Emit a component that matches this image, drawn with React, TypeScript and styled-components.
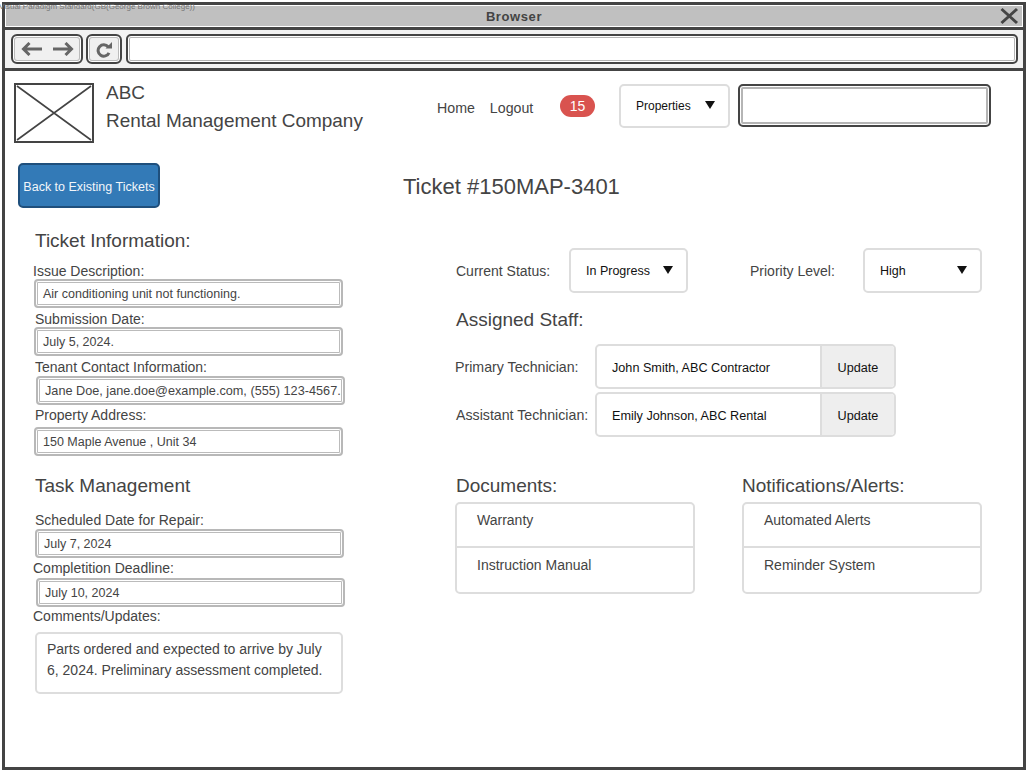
import React from 'react'
import styled, { createGlobalStyle } from 'styled-components'

const Global = createGlobalStyle`
  html, body { margin: 0; padding: 0; background: #fff; }
  body { font-family: "Liberation Sans", Arial, sans-serif; color: #444; }
  * { box-sizing: border-box; }
`

const Page = styled.div`
  position: relative;
  width: 1030px;
  height: 774px;
  padding: 2px 4px 4px 2px;
  overflow: hidden;
`
const Watermark = styled.div`
  position: absolute;
  z-index: 2;
  left: -1px;
  top: 2px;
  font-size: 8px;
  line-height: 9px;
  color: #777;
  white-space: nowrap;
`
const Frame = styled.div`
  height: 100%;
  border: 3px solid #444;
  display: flex;
  flex-direction: column;
`
const TitleBar = styled.div`
  position: relative;
  height: 20px;
  margin: 1px 1px 0;
  background: #c0c0c0;
  text-align: center;
  font-size: 13px;
  font-weight: bold;
  line-height: 22px;
  letter-spacing: 0.6px;
  color: #444;
  flex: none;
`
const CloseIcon = styled.svg`
  position: absolute;
  right: 3px;
  top: 1px;
`
const Toolbar = styled.div`
  flex: none;
  height: 44px;
  margin-top: 1px;
  border-top: 3px solid #444;
  border-bottom: 3px solid #444;
  background: #f2f2f2;
  display: flex;
  gap: 3px;
  padding: 4px 5px 0 6px;
  align-items: flex-start;
`
const ToolButton = styled.div<{ $width: number }>`
  width: ${(p) => p.$width}px;
  height: 30px;
  border: 2px solid #444;
  border-radius: 6px;
  background: #f0f0f0;
  box-shadow: inset 0 0 0 1px #fff, inset 0 0 0 2px #bbb;
  display: flex;
  align-items: center;
  justify-content: center;
  gap: 11px;
`
const AddressBar = styled.div`
  flex: 1;
  height: 30px;
  margin-left: 1px;
  border: 2px solid #444;
  border-radius: 5px;
  background: #fff;
  box-shadow: inset 0 0 0 1px #fff, inset 0 0 0 2px #b5b5b5;
`
const Header = styled.header`
  flex: none;
  display: flex;
  align-items: flex-start;
  height: 92px;
  padding: 12px 0 0 9px;
`
const LogoBox = styled.svg`
  flex: none;
  display: block;
`
const Brand = styled.div`
  width: 331px;
  margin-left: 12px;
  margin-top: -4px;
  font-size: 18.95px;
  line-height: 28px;
  color: #444;
`
const Nav = styled.nav`
  display: flex;
  gap: 15px;
  width: 123px;
  margin-top: 17px;
  font-size: 14.2px;
  line-height: 17px;
  color: #444;
`
const Badge = styled.span`
  width: 35px;
  height: 22px;
  margin-top: 12px;
  border-radius: 11px;
  background: #d9534f;
  color: #fff;
  font-size: 14px;
  line-height: 22px;
  text-align: center;
  flex: none;
`
const Select = styled.div<{ $width: number }>`
  flex: none;
  width: ${(p) => p.$width}px;
  height: 45px;
  border: 2px solid #ddd;
  border-radius: 5px;
  background: #fff;
  display: flex;
  align-items: center;
  justify-content: space-between;
  padding: 1px 13px 0 15px;
  font-size: 12.5px;
  color: #111;
`
const HeaderSelect = styled(Select)`
  height: 44px;
  margin: 1px 0 0 24px;
  padding: 0 13px 1px 15px;
  font-size: 12px;
`
const Caret = styled.i`
  display: block;
  width: 0;
  height: 0;
  margin-top: -2px;
  border-left: 5px solid transparent;
  border-right: 5px solid transparent;
  border-top: 8px solid #111;
`
const SearchBox = styled.div`
  flex: none;
  width: 253px;
  height: 43px;
  margin: 1px 0 0 8px;
  border: 2px solid #444;
  border-radius: 5px;
  box-shadow: inset 0 0 0 1px #fff, inset 0 0 0 3px #b5b5b5;
`
const TitleRow = styled.div`
  flex: none;
  display: flex;
  align-items: center;
  height: 45px;
  padding-left: 13px;
`
const BackButton = styled.div`
  width: 142px;
  height: 45px;
  flex: none;
  border: 2px solid #1f4f7c;
  border-radius: 5px;
  background: #337ab7;
  color: #f2f6fa;
  font-size: 12.5px;
  line-height: 44px;
  text-align: center;
  white-space: nowrap;
`
const TicketTitle = styled.h1`
  margin: 3px 0 0 243px;
  font-size: 22px;
  font-weight: normal;
  color: #444;
`
const Columns = styled.div`
  display: flex;
  padding-top: 22px;
`
const LeftColumn = styled.section`
  width: 451px;
  flex: none;
  padding-left: 28px;
`
const RightColumn = styled.section`
  flex: 1;
  padding-top: 18px;
`
const Heading = styled.h2<{ $top?: number; $indent?: number }>`
  margin: ${(p) => p.$top ?? 0}px 0 0 ${(p) => p.$indent ?? 2}px;
  font-size: 19px;
  line-height: 22px;
  font-weight: normal;
  color: #444;
`
const FieldLabel = styled.div<{ $indent?: number; $top?: number }>`
  margin: ${(p) => p.$top ?? 0}px 0 0 ${(p) => p.$indent ?? 2}px;
  font-size: 14px;
  line-height: 18px;
  color: #444;
`
const Field = styled.div<{ $indent?: number; $top?: number; $size?: number }>`
  width: 309px;
  height: 29px;
  margin: ${(p) => p.$top ?? 0}px 0 0 ${(p) => p.$indent ?? 1}px;
  padding-left: 7px;
  border: 2px solid #b8b8b8;
  border-radius: 4px;
  box-shadow: inset 0 0 0 1px #fff, inset 0 0 0 2px #bbb;
  font-size: ${(p) => p.$size ?? 12.5}px;
  line-height: 27px;
  color: #444;
  white-space: nowrap;
  overflow: hidden;
`
const CommentBox = styled.div`
  width: 308px;
  height: 62px;
  margin: 7px 0 0 2px;
  padding: 5px 10px;
  border: 2px solid #ddd;
  border-radius: 5px;
  font-size: 14px;
  line-height: 21px;
  color: #444;
`
const StatusRow = styled.div`
  display: flex;
  align-items: center;
`
const RowLabel = styled.div<{ $width: number; $left?: number }>`
  flex: none;
  width: ${(p) => p.$width}px;
  margin-left: ${(p) => p.$left ?? 0}px;
  font-size: 14.2px;
  line-height: 18px;
  color: #444;
`
const StatusLabel = styled(RowLabel)`
  font-size: 14px;
`
const StaffRow = styled.div<{ $top: number; $indent?: number }>`
  display: flex;
  align-items: center;
  margin: ${(p) => p.$top}px 0 0 ${(p) => p.$indent ?? 0}px;
`
const InputGroup = styled.div`
  width: 301px;
  height: 45px;
  border: 2px solid #ddd;
  border-radius: 5px;
  display: flex;
  overflow: hidden;
  font-size: 12.65px;
  line-height: 45px;
  color: #111;
`
const GroupValue = styled.div`
  flex: 1;
  padding-left: 15px;
`
const UpdateButton = styled.div`
  width: 74px;
  flex: none;
  background: #eee;
  border-left: 2px solid #ddd;
  text-align: center;
`
const Lists = styled.div`
  display: flex;
  gap: 46px;
  margin-top: 38px;
`
const ListColumn = styled.div`
  width: 240px;
`
const ListCard = styled.ul<{ $indent?: number }>`
  width: 240px;
  height: 92px;
  margin: 5px 0 0 ${(p) => p.$indent ?? 0}px;
  padding: 0;
  list-style: none;
  border: 2px solid #ddd;
  border-radius: 5px;
`
const ListItem = styled.li`
  height: 42px;
  padding: 7px 0 0 20px;
  font-size: 14px;
  line-height: 18px;
  color: #444;
  & + & {
    height: 44px;
    padding-top: 8px;
    border-top: 2px solid #ddd;
  }
`
const FlippedSvg = styled.svg<{ $flip?: boolean }>`
  transform: ${(p) => (p.$flip ? 'scaleX(-1)' : 'none')};
`
const NavArrow = ({ flip }: { flip?: boolean }) => (
  <FlippedSvg $flip={flip} width="21" height="14" viewBox="0 0 21 14" fill="none">
    <path d="M21 7H2.5M8.5 1L2.5 7l6 6" stroke="#666" strokeWidth="3" />
  </FlippedSvg>
)
const ReloadIcon = () => (
  <svg width="17" height="17" viewBox="0 0 17 17" fill="none">
    <path d="M12.2 5.8A5.7 5.7 0 1 0 13 11.8" stroke="#666" strokeWidth="3" />
    <path d="M9.5 7.5H16V1z" fill="#666" />
  </svg>
)

export default function App() {
  return (
    <Page>
      <Global />
      <Watermark>Visual Paradigm Standard(GB(George Brown College))</Watermark>
      <Frame>
        <TitleBar>
          Browser
          <CloseIcon width="19" height="18" viewBox="0 0 19 18">
            <path d="M1.5 2l15.5 14M17 2L1.5 16" stroke="#444" strokeWidth="3" />
          </CloseIcon>
        </TitleBar>
        <Toolbar>
          <ToolButton $width={72}>
            <NavArrow />
            <NavArrow flip />
          </ToolButton>
          <ToolButton $width={36}>
            <ReloadIcon />
          </ToolButton>
          <AddressBar />
        </Toolbar>
        <Header>
          <LogoBox width="80" height="60" viewBox="0 0 80 60">
            <rect x="1" y="1" width="78" height="58" fill="#fff" stroke="#444" strokeWidth="2" />
            <path d="M3 3l74 54M77 3L3 57" stroke="#444" strokeWidth="1.6" />
          </LogoBox>
          <Brand>
            ABC
            <br />
            Rental Management Company
          </Brand>
          <Nav>
            <span>Home</span>
            <span>Logout</span>
          </Nav>
          <Badge>15</Badge>
          <HeaderSelect $width={111}>
            Properties
            <Caret />
          </HeaderSelect>
          <SearchBox />
        </Header>
        <TitleRow>
          <BackButton>Back to Existing Tickets</BackButton>
          <TicketTitle>Ticket #150MAP-3401</TicketTitle>
        </TitleRow>
        <Columns>
          <LeftColumn>
            <Heading>Ticket Information:</Heading>
            <FieldLabel $top={10} $indent={0}>Issue Description:</FieldLabel>
            <Field $top={-1}>Air conditioning unit not functioning.</Field>
            <FieldLabel $top={2}>Submission Date:</FieldLabel>
            <Field $top={-1}>July 5, 2024.</Field>
            <FieldLabel $top={2}>Tenant Contact Information:</FieldLabel>
            <Field $top={0} $indent={3} $size={12.7}>Jane Doe, jane.doe@example.com, (555) 123-4567.</Field>
            <FieldLabel $top={1}>Property Address:</FieldLabel>
            <Field $top={3}>150 Maple Avenue , Unit 34</Field>
            <Heading $top={19}>Task Management</Heading>
            <FieldLabel $top={14}>Scheduled Date for Repair:</FieldLabel>
            <Field $top={0} $indent={2}>July 7, 2024</Field>
            <FieldLabel $top={1} $indent={0}>Completition Deadline:</FieldLabel>
            <Field $top={1} $indent={3}>July 10, 2024</Field>
            <FieldLabel $top={0} $indent={0}>Comments/Updates:</FieldLabel>
            <CommentBox>
              Parts ordered and expected to arrive by July 6, 2024. Preliminary assessment completed.
            </CommentBox>
          </LeftColumn>
          <RightColumn>
            <StatusRow>
              <StatusLabel $width={113}>Current Status:</StatusLabel>
              <Select $width={119}>
                In Progress
                <Caret />
              </Select>
              <StatusLabel $width={113} $left={62}>Priority Level:</StatusLabel>
              <Select $width={119}>
                High
                <Caret />
              </Select>
            </StatusRow>
            <Heading $top={16} $indent={0}>Assigned Staff:</Heading>
            <StaffRow $top={13} $indent={-1}>
              <RowLabel $width={140}>Primary Technician:</RowLabel>
              <InputGroup>
                <GroupValue>John Smith, ABC Contractor</GroupValue>
                <UpdateButton>Update</UpdateButton>
              </InputGroup>
            </StaffRow>
            <StaffRow $top={3}>
              <RowLabel $width={139}>Assistant Technician:</RowLabel>
              <InputGroup>
                <GroupValue>Emily Johnson, ABC Rental</GroupValue>
                <UpdateButton>Update</UpdateButton>
              </InputGroup>
            </StaffRow>
            <Lists>
              <ListColumn>
                <Heading $indent={0}>Documents:</Heading>
                <ListCard $indent={-1}>
                  <ListItem>Warranty</ListItem>
                  <ListItem>Instruction Manual</ListItem>
                </ListCard>
              </ListColumn>
              <ListColumn>
                <Heading $indent={0}>Notifications/Alerts:</Heading>
                <ListCard>
                  <ListItem>Automated Alerts</ListItem>
                  <ListItem>Reminder System</ListItem>
                </ListCard>
              </ListColumn>
            </Lists>
          </RightColumn>
        </Columns>
      </Frame>
    </Page>
  )
}
